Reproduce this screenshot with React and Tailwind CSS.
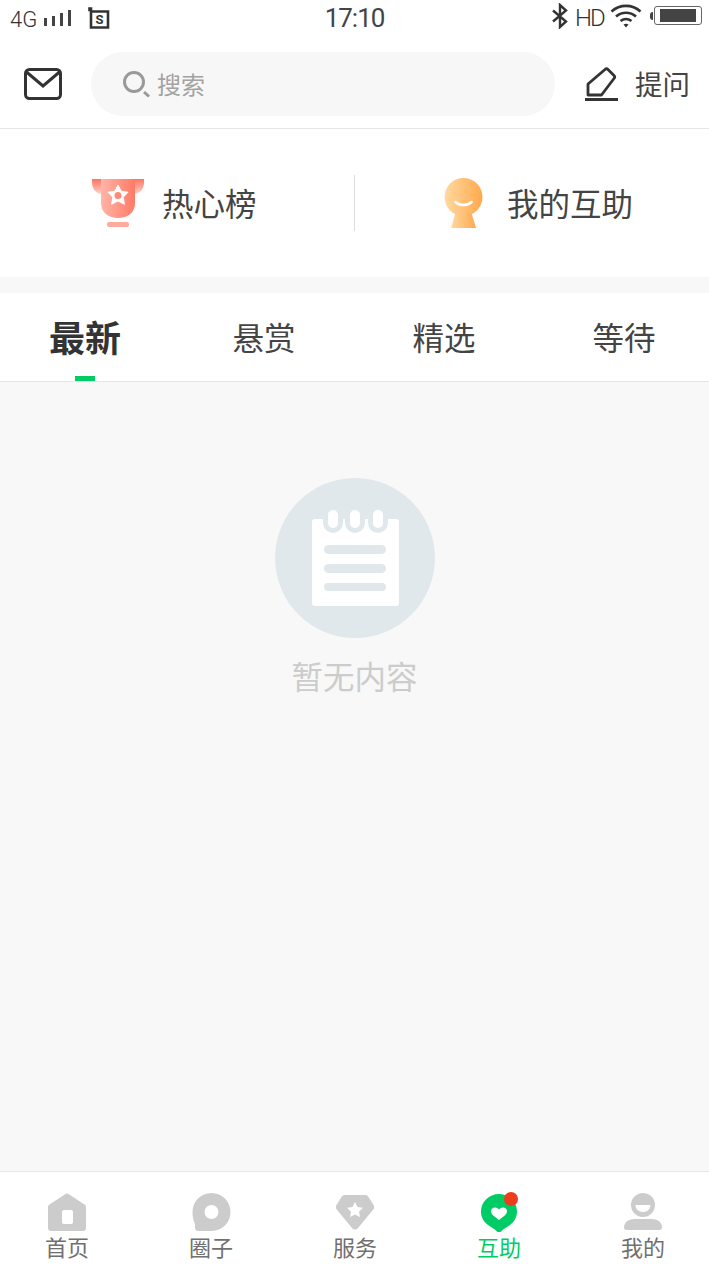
// Community help page with header, shortcuts, tabs and bottom navigation
const CJK = "font-['Noto_Sans_CJK_SC','Noto_Sans',sans-serif]";

function StatusBar() {
  return (
    <div className="relative h-[38px] flex items-start text-[#333]">
      <div className="flex items-start pl-[10px] pt-[8px]">
        <span className="text-[22px] leading-[24px] font-['Roboto',sans-serif] font-light text-[#333]">4G</span>
        <svg width="30" height="18" viewBox="0 0 30 18" className="ml-[6px] mt-[1px]" fill="#444">
          <rect x="1" y="9" width="3" height="8" />
          <rect x="9" y="7" width="3" height="10" />
          <rect x="17" y="4" width="3" height="13" />
          <rect x="25" y="1" width="3" height="16" />
        </svg>
        <svg width="22" height="24" viewBox="0 0 22 24" className="ml-[15px] mt-[-3px]">
          <path d="M1.500 5h1.500V3.500H1.500z M3 6.500h17v16H3z" fill="none" stroke="#333" strokeWidth="2.600" />
          <text x="11.500" y="19" textAnchor="middle" fontSize="13" fontWeight="700" fontFamily="Roboto, sans-serif" fill="#333">S</text>
        </svg>
      </div>
      <div className="absolute left-0 right-0 top-[2px] text-center text-[26px] leading-[32px] tracking-[-1px] font-['Roboto',sans-serif] text-[#444]">17:10</div>
      <div className="ml-auto flex items-start pt-[3px]">
        <svg width="18" height="26" viewBox="0 0 18 26" fill="none" stroke="#333" strokeWidth="2.400">
          <path d="M2 7.500 15 18.500 9 24V2l6 5.500L2 18.500" />
        </svg>
        <span className="ml-[6px] mt-[1px] text-[24px] leading-[28px] tracking-[-1.800px] font-['Roboto',sans-serif] font-light text-[#333]">HD</span>
        <svg width="32" height="24" viewBox="0 0 32 24" className="ml-[6px] mt-[1px]" fill="none" stroke="#333" strokeWidth="2.600">
          <path d="M1.500 7.500c8.500-7.500 20.500-7.500 29 0" />
          <path d="M6 12.500c6-5 14-5 20 0" />
          <path d="M10.500 17c3.500-2.500 7.500-2.500 11 0" />
          <path d="M13.500 20.500 16 23.500l2.500-3c-1.500-1-3.500-1-5 0z" fill="#333" stroke="none" />
        </svg>
        <div className="ml-[8px] mt-[9px] w-[3px] h-[8px] bg-[#444] rounded-l-sm" />
        <div className="ml-[1px] mt-[3px] w-[48px] h-[19px] border border-[#666] rounded-[3px] px-[5px] py-[2px] mr-[7px]">
          <div className="w-full h-full bg-[#444]" />
        </div>
      </div>
    </div>
  );
}

function Header() {
  return (
    <div className="h-[91px] border-b border-[#e6e6e6] flex items-start pt-[14px]">
      <svg width="38" height="32" viewBox="0 0 38 32" className="ml-[24px] mt-[16px]" fill="none" stroke="#333" strokeWidth="3">
        <rect x="1.500" y="1.500" width="35" height="29" rx="4" />
        <path d="M2.500 4 19 18 35.500 4" strokeLinecap="round" />
      </svg>
      <div className="ml-[29px] w-[464px] h-[64px] rounded-[32px] bg-[#f7f7f7] flex items-center pl-[31px]">
        <svg width="28" height="28" viewBox="0 0 28 28" fill="none" stroke="#999" className="shrink-0">
          <circle cx="12" cy="12" r="9.500" strokeWidth="3" />
          <path d="M22 22l5 4.500" strokeWidth="3" />
        </svg>
        <span className={`ml-[7px] text-[24px] leading-[32px] text-[#a3a3a3] ${CJK}`}>搜索</span>
      </div>
      <svg width="36" height="36" viewBox="0 0 36 36" className="ml-[28px] mt-[14px]" fill="none" stroke="#333">
        <path d="M5 29V18L22 3.500c1-1 2-1 3 0l6 6c1 1 1 2 0 3L18.500 29z" strokeWidth="2.800" strokeLinejoin="round" />
        <path d="M2 33.500h33" strokeWidth="2.800" />
      </svg>
      <span className={`ml-[16px] mt-[13px] text-[27.500px] leading-[36px] text-[#444] ${CJK}`}>提问</span>
    </div>
  );
}

function TrophyIcon() {
  return (
    <svg width="52" height="48" viewBox="0 0 52 48" className="shrink-0">
      <defs>
        <linearGradient id="tr" x1="0" x2="1" y1="0" y2="0">
          <stop offset="0" stopColor="#ffb5a8" />
          <stop offset="1" stopColor="#ff7a66" />
        </linearGradient>
        <linearGradient id="tr2" x1="0" x2="0" y1="0" y2="1">
          <stop offset="0" stopColor="#ff7460" />
          <stop offset="1" stopColor="#ffd0c8" />
        </linearGradient>
      </defs>
      <path d="M0 0h52v3c0 6-3 11-9 12H9C3 14 0 9 0 3z" fill="url(#tr2)" />
      <path d="M9 0h34v24c0 10-8 15-17 15S9 34 9 24z" fill="url(#tr)" />
      <path d="M26 6l3.200 6.200 6.800 1-4.800 5 1.200 7-6.400-3.200-6.400 3.200 1.200-7-4.800-5 6.800-1z" fill="#fff" stroke="#fff" strokeLinejoin="round" />
      <circle cx="26" cy="16.500" r="3.500" fill="#ff8a78" />
      <rect x="15" y="43" width="22" height="5" rx="2" fill="#ffab9c" />
    </svg>
  );
}

function SmileIcon() {
  return (
    <svg width="39" height="50" viewBox="0 0 39 50" className="shrink-0">
      <defs>
        <linearGradient id="sm" x1="0" x2="1" y1="0" y2="0">
          <stop offset="0" stopColor="#ffd9a0" />
          <stop offset="1" stopColor="#ffa94d" />
        </linearGradient>
      </defs>
      <path d="M13 30 7 50h25l-6-20z" fill="url(#sm)" />
      <circle cx="19.500" cy="19" r="19" fill="url(#sm)" />
      <path d="M11.500 24c4 4 12 4 16 0" fill="none" stroke="#fff" strokeWidth="2.500" strokeLinecap="round" />
    </svg>
  );
}

function Shortcuts() {
  return (
    <div className="h-[148px] bg-white flex items-center">
      <div className="w-[354px] flex items-center pl-[92px]">
        <TrophyIcon />
        <span className={`ml-[18px] mt-[-2px] text-[31.500px] leading-[44px] text-[#444] ${CJK}`}>热心榜</span>
      </div>
      <div className="w-px h-[56px] bg-[#ddd]" />
      <div className="flex items-center pl-[89px]">
        <SmileIcon />
        <span className={`ml-[24px] mt-[-2px] text-[31.500px] leading-[44px] text-[#444] ${CJK}`}>我的互助</span>
      </div>
    </div>
  );
}

function Tabs() {
  const tabs = ['最新', '悬赏', '精选', '等待'];
  return (
    <div className="h-[89px] bg-white border-b border-[#e6e6e6] overflow-hidden">
      <div className="ml-[-5px] w-[720px] grid grid-cols-4 h-full">
        {tabs.map((tab, i) => (
          <div key={tab} className="relative flex justify-center pt-[21px]">
            <span className={`${i === 0 ? 'text-[36px] font-bold text-[#333]' : 'text-[31.500px] mr-[2px] text-[#444]'} leading-[44px] ${CJK}`}>{tab}</span>
            {i === 0 && <div className="absolute bottom-0 w-[20px] h-[5px] bg-[#00cc66]" />}
          </div>
        ))}
      </div>
    </div>
  );
}

function EmptyState() {
  return (
    <div className="flex-1 bg-[#f8f8f8] flex flex-col items-center pt-[96px]">
      <svg width="160" height="160" viewBox="0 0 160 160">
        <circle cx="80" cy="80" r="80" fill="#e1e8ec" />
        <rect x="37" y="41" width="87" height="87" rx="3" fill="#fff" />
        <g fill="#e1e8ec">
          <rect x="48" y="26" width="20" height="29" rx="10" />
          <rect x="70" y="26" width="20" height="29" rx="10" />
          <rect x="93" y="26" width="20" height="29" rx="10" />
        </g>
        <g fill="#fff">
          <rect x="53" y="32" width="10" height="18" rx="5" />
          <rect x="75" y="32" width="10" height="18" rx="5" />
          <rect x="98" y="32" width="10" height="18" rx="5" />
        </g>
        <g fill="#e1e8ec">
          <rect x="49" y="67" width="62" height="9" rx="4.500" />
          <rect x="49" y="86" width="62" height="9" rx="4.500" />
          <rect x="49" y="105" width="62" height="8" rx="4" />
        </g>
      </svg>
      <span className={`mt-[15px] text-[31.500px] leading-[44px] text-[#ccc] ${CJK}`}>暂无内容</span>
    </div>
  );
}

const navItems = [
  {
    label: '首页',
    icon: (
      <path fillRule="evenodd" d="M17.500 1c1-.7 2-.7 3 0l16 10.500c1 .7 1.500 1.500 1.500 3V35c0 2-1 3-3 3H3c-2 0-3-1-3-3V14.500c0-1.500.5-2.300 1.500-3zM16 17c-1.500 0-2 1-2 2v10c0 1.500 1 2 2 2h7c1.500 0 2-1 2-2V19c0-1-.5-2-2-2z" fill="#ccc" />
    ),
  },
  {
    label: '圈子',
    icon: (
      <path fillRule="evenodd" d="M19.500 0C30 0 38.500 8.500 38.500 19S30 38 19.500 38H6c-2 0-3-1.500-3-3v-4C1 27.500.5 23 .5 19 .5 8.500 9 0 19.500 0zm0 12a7 7 0 1 0 0 14 7 7 0 0 0 0-14z" fill="#ccc" />
    ),
  },
  {
    label: '服务',
    icon: (
      <>
        <path d="M9 2h20c1.500 0 2.500.5 3.500 2l5 8c1 1.500 1 3-.2 4.500L22 35c-1.500 2-4.500 2-6 0L.7 16.500C-.5 15-.5 13.500.5 12l5-8C6.500 2.500 7.500 2 9 2z" fill="#ccc" />
        <path d="M19 9l2.500 5 5.500.8-4 3.900 1 5.300-5-2.600-5 2.600 1-5.300-4-3.900 5.500-.8z" fill="#fff" />
      </>
    ),
  },
  {
    label: '互助',
    active: true,
    icon: (
      <>
        <path d="M18 0c10 0 18 8 18 17.500 0 6-3 10.500-7 13.500-3 2.200-6 3.700-9 6.500-1 1-3 1-4 0-3-2.800-6-4.300-9-6.500C3 28 0 23.500 0 17.500 0 8 8 0 18 0z" fill="#00cc66" transform="translate(1 1)" />
        <path d="M19 27c-3-2.500-8-5-8-9 0-2.300 2-3.500 4-3.500 1.700 0 3 .8 4 2 1-1.200 2.300-2 4-2 2 0 4 1.200 4 3.500 0 4-5 6.500-8 9z" fill="#fff" />
      </>
    ),
  },
  {
    label: '我的',
    icon: (
      <>
        <circle cx="19" cy="12" r="12" fill="#ccc" />
        <path d="M11.500 12h15c0 4-3 7-7.500 7s-7.500-3-7.500-7z" fill="#fff" />
        <path d="M10 26h18c6 0 10 4 10 8.500 0 1.500-1 2.500-2.500 2.500h-33C1 37 0 36 0 34.500 0 30 4 26 10 26z" fill="#ccc" />
      </>
    ),
  },
];

function BottomNav() {
  return (
    <div className="h-[100px] bg-white border-t border-[#e6e6e6] overflow-hidden">
      <div className="ml-[-5px] w-[720px] grid grid-cols-5">
        {navItems.map((item) => (
          <div key={item.label} className="relative flex flex-col items-center pt-[21px]">
            <svg width="39" height="39" viewBox="0 0 39 39">{item.icon}</svg>
            {item.active && <div className="absolute top-[20px] left-[77px] w-[14px] h-[14px] rounded-full bg-[#ee3d1c]" />}
            <span className={`mt-[-1px] text-[22px] leading-[30px] ${item.active ? 'text-[#00cc66]' : 'text-[#707070]'} ${CJK}`}>{item.label}</span>
          </div>
        ))}
      </div>
    </div>
  );
}

export default function App() {
  return (
    <div className="w-[709px] h-[1271px] bg-white flex flex-col overflow-hidden">
      <StatusBar />
      <Header />
      <Shortcuts />
      <div className="h-[16px] bg-[#f8f8f8]" />
      <Tabs />
      <EmptyState />
      <BottomNav />
    </div>
  );
}
